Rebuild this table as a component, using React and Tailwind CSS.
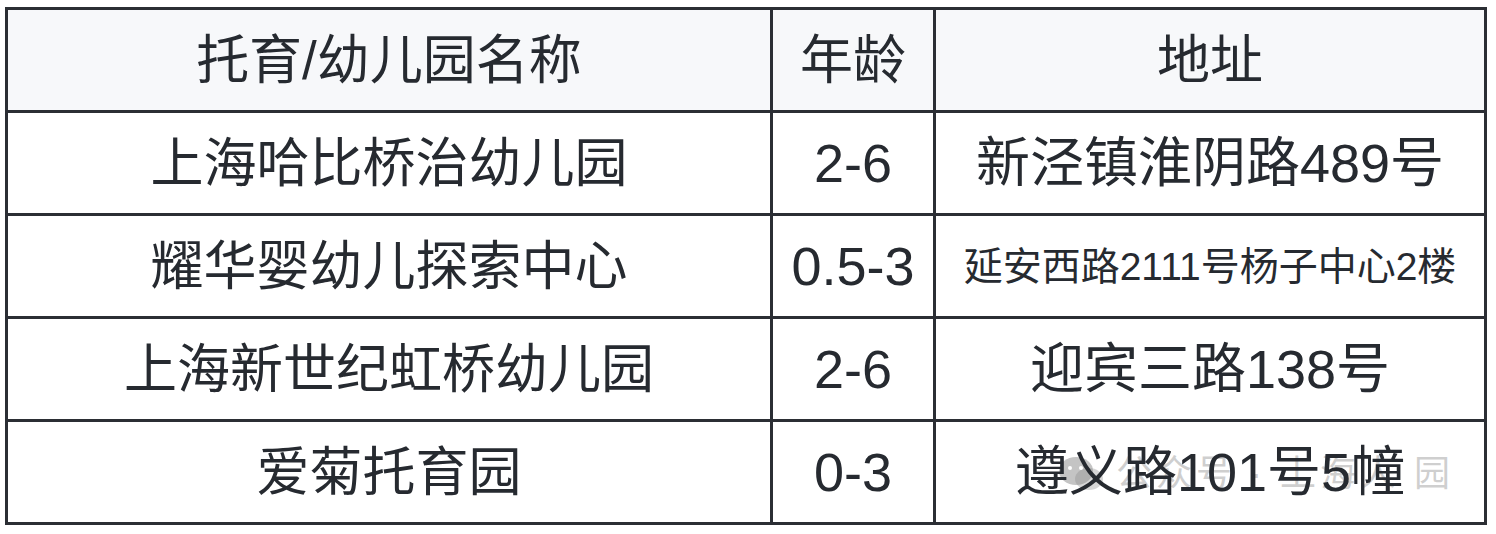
import React from "react";

const rows = [
  { name: "上海哈比桥治幼儿园", age: "2-6", addr: "新泾镇淮阴路489号" },
  { name: "耀华婴幼儿探索中心", age: "0.5-3", addr: "延安西路2111号杨子中心2楼", small: true },
  { name: "上海新世纪虹桥幼儿园", age: "2-6", addr: "迎宾三路138号" },
  { name: "爱菊托育园", age: "0-3", addr: "遵义路101号5幢", mark: true },
];

const font = {
  fontFamily: '"Liberation Sans", "Noto Sans CJK SC", sans-serif',
};

const App = () => {
  return (
    <div className="w-[1496px] h-[534px] bg-white pt-[7px] pl-[5px]" style={font}>
      <table className="w-[1482px] border-collapse table-fixed text-[#262a30]">
        <colgroup>
          <col className="w-[765px]" />
          <col className="w-[163px]" />
          <col />
        </colgroup>
        <thead>
          <tr className="h-[103px] bg-[#f7f8fa]">
            <th className="border-[3px] border-[#2b2e34] font-normal text-[53px] leading-none">
              托育/幼儿园名称
            </th>
            <th className="border-[3px] border-[#2b2e34] font-normal text-[53px] leading-none">
              年龄
            </th>
            <th className="border-[3px] border-[#2b2e34] font-normal text-[53px] leading-none">
              地址
            </th>
          </tr>
        </thead>
        <tbody>
          {rows.map((r) => (
            <tr key={r.name} className="h-[103px]">
              <td className="border-[3px] border-[#2b2e34] text-center text-[53px] leading-none">
                {r.name}
              </td>
              <td className="border-[3px] border-[#2b2e34] text-center text-[54px] leading-none">
                {r.age}
              </td>
              <td className="relative border-[3px] border-[#2b2e34] text-center leading-none">
                {r.mark && (
                  <div className="absolute left-[122px] top-[32px] flex items-center gap-3 text-[36px] tracking-[4px] text-[#a0a0a0]/50 pointer-events-none">
                    <svg width="46" height="40" viewBox="0 0 46 40">
                      <ellipse cx="18" cy="17" rx="17" ry="14" fill="#8a8a8a" fillOpacity="0.5" />
                      <ellipse cx="31" cy="25" rx="14" ry="11" fill="#8a8a8a" fillOpacity="0.35" />
                      <circle cx="12" cy="14" r="2" fill="#fff" />
                      <circle cx="23" cy="14" r="2" fill="#fff" />
                    </svg>
                    <span>公众号 · 上海人 园</span>
                  </div>
                )}
                <span className={"relative " + (r.small ? "text-[39px]" : "text-[54px]")}>
                  {r.addr}
                </span>
              </td>
            </tr>
          ))}
        </tbody>
      </table>
    </div>
  );
};

export default App;
